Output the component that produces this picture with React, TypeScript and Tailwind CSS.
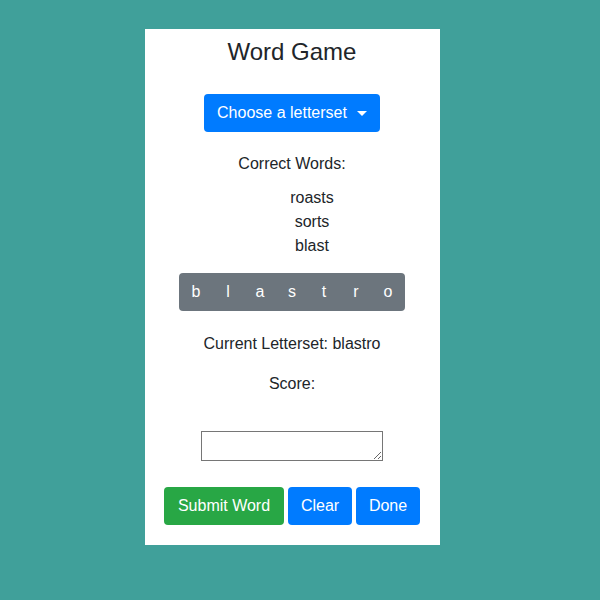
import React from "react";

const letters = ["b", "l", "a", "s", "t", "r", "o"];
const words = ["roasts", "sorts", "blast"];

export default function App() {
  return (
    <div
      className="min-h-[600px] bg-[#40a09a] flex items-start text-[#212529]"
      style={{ fontFamily: '"Liberation Sans", Arial, sans-serif' }}
    >
      <div className="w-[295px] ml-[145px] mt-[29px] mb-[55px] bg-white flex flex-col items-center pt-[8px] pb-[20px] pr-[1px]">
        <h1 className="text-[24px] leading-[29px]">Word Game</h1>

        <button className="mt-[28px] h-[38px] w-[176px] rounded-[4px] bg-[#007bff] text-white text-[16px] flex items-center justify-center gap-[10px]">
          <span>Choose a letterset</span>
          <span className="w-0 h-0 border-l-[5px] border-r-[5px] border-t-[5px] border-l-transparent border-r-transparent border-t-white"></span>
        </button>

        <p className="mt-[20px] text-[16px] leading-[24px]">Correct Words:</p>

        <ul className="mt-[10px] pl-[40px] text-[16px] leading-[24px] text-center">
          {words.map((w) => (
            <li key={w}>{w}</li>
          ))}
        </ul>

        <div className="mt-[15px] flex rounded-[4px] bg-[#6c757d] px-[1px] h-[38px]">
          {letters.map((l) => (
            <button key={l} className="w-[32px] h-full text-white text-[16px] flex items-center justify-center">
              {l}
            </button>
          ))}
        </div>

        <p className="mt-[21px] text-[16px] leading-[24px]">Current Letterset: blastro</p>
        <p className="mt-[16px] text-[16px] leading-[24px]">Score:</p>

        <textarea className="mt-[35px] w-[182px] h-[30px] border border-[#767676] resize-y block" />

        <div className="mt-[26px] flex gap-[4px]">
          <button className="h-[38px] w-[120px] rounded-[4px] bg-[#28a745] text-white text-[16px]">Submit Word</button>
          <button className="h-[38px] w-[64px] rounded-[4px] bg-[#007bff] text-white text-[16px]">Clear</button>
          <button className="h-[38px] w-[64px] rounded-[4px] bg-[#007bff] text-white text-[16px]">Done</button>
        </div>
      </div>
    </div>
  );
}
